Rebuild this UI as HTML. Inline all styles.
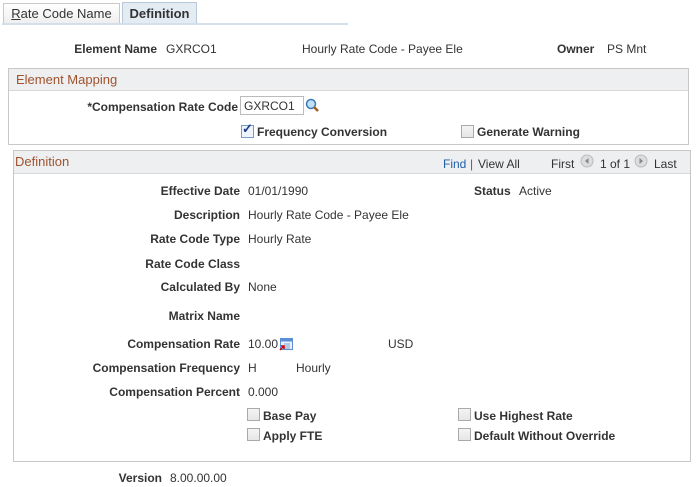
<!DOCTYPE html>
<html><head><meta charset="utf-8"><style>
body{margin:0;width:699px;height:487px;background:#fff;font-family:"Liberation Sans",Arial,sans-serif;font-size:12px;color:#333;position:relative;overflow:hidden}
.a{position:absolute;white-space:nowrap;line-height:14px}
.b{font-weight:bold}
.r{text-align:right}
.cb{position:absolute;width:11px;height:11px;border:1px solid #aaa;background:linear-gradient(#f4f4f4,#e6e6e6)}
.box{position:absolute;border:1px solid #c8c8c8}
.hd{position:absolute;left:0;right:0;top:0;background:#eeeff1;border-bottom:1px solid #d8d8d8;color:#a0522d;font-size:13px}
</style></head><body>
<div class="a" style="left:3px;top:3px;width:115px;height:20px;border:1px solid #c8c8c8;border-bottom:none;background:linear-gradient(#fff,#eee);font-size:13px;line-height:20px;text-align:center;color:#333"><u>R</u>ate Code Name</div>
<div class="a" style="left:122px;top:2px;width:73px;height:21px;border:1px solid #b8c8d8;border-bottom:none;background:#e3ebf3;font-size:13px;line-height:22px;text-align:center;font-weight:bold;color:#333">Definition</div>
<div style="position:absolute;left:2px;top:23px;width:346px;height:2px;background:#d3dfeb"></div>

<div class="a b r" style="left:40px;width:117px;top:42px">Element Name</div>
<div class="a" style="left:166px;top:42px">GXRCO1</div>
<div class="a" style="left:302px;top:42px">Hourly Rate Code - Payee Ele</div>
<div class="a b" style="left:557px;top:42px">Owner</div>
<div class="a" style="left:607px;top:42px">PS Mnt</div>

<div class="box" style="left:8px;top:68px;width:679px;height:75px">
<div class="hd" style="height:21px;line-height:21px;padding-left:7px">Element Mapping</div>
</div>
<div class="a b r" style="left:40px;width:198px;top:100px">*Compensation Rate Code</div>
<div class="a" style="left:240px;top:96px;width:62px;height:19px;border:1px solid #bbb;line-height:19px;padding-left:3px;box-sizing:border-box;width:64px">GXRCO1</div>
<svg style="position:absolute;left:305px;top:98px" width="15" height="15"><circle cx="6" cy="6" r="4.5" fill="#bfe0f5" stroke="#3a7ab8" stroke-width="1.5"/><line x1="9" y1="9" x2="13" y2="13" stroke="#a06020" stroke-width="2.5"/></svg>
<div class="cb" style="left:241px;top:125px;background:#eef4fb;border-color:#7a9cc0"></div>
<div class="a" style="left:242px;top:122px;color:#1a3a8a;font-weight:bold;font-size:13px">✓</div>
<div class="a b" style="left:257px;top:125px">Frequency Conversion</div>
<div class="cb" style="left:461px;top:125px"></div>
<div class="a b" style="left:477px;top:125px">Generate Warning</div>

<div class="box" style="left:13px;top:150px;width:676px;height:310px">
<div class="hd" style="height:22px;line-height:22px;padding-left:1px">Definition</div>
</div>
<div class="a" style="left:443px;top:157px;color:#1f5fa8">Find</div>
<div class="a" style="left:470px;top:157px;color:#c33">|</div>
<div class="a" style="left:478px;top:157px">View All</div>
<div class="a" style="left:551px;top:157px">First</div>
<svg style="position:absolute;left:580px;top:154px" width="14" height="14"><circle cx="7" cy="7" r="6" fill="#ddd" stroke="#bbb"/><path d="M8.5 4L5 7l3.5 3z" fill="#888"/></svg>
<div class="a" style="left:600px;top:157px">1 of 1</div>
<svg style="position:absolute;left:634px;top:154px" width="14" height="14"><circle cx="7" cy="7" r="6" fill="#ddd" stroke="#bbb"/><path d="M5.5 4L9 7l-3.5 3z" fill="#888"/></svg>
<div class="a" style="left:654px;top:157px">Last</div>

<div class="a b r" style="left:40px;width:200px;top:184px">Effective Date</div><div class="a" style="left:248px;top:184px">01/01/1990</div>
<div class="a b" style="left:474px;top:184px">Status</div><div class="a" style="left:519px;top:184px">Active</div>
<div class="a b r" style="left:40px;width:200px;top:208px">Description</div><div class="a" style="left:248px;top:208px">Hourly Rate Code - Payee Ele</div>
<div class="a b r" style="left:40px;width:200px;top:232px">Rate Code Type</div><div class="a" style="left:248px;top:232px">Hourly Rate</div>
<div class="a b r" style="left:40px;width:200px;top:257px">Rate Code Class</div>
<div class="a b r" style="left:40px;width:200px;top:280px">Calculated By</div><div class="a" style="left:248px;top:280px">None</div>
<div class="a b r" style="left:40px;width:200px;top:309px">Matrix Name</div>
<div class="a b r" style="left:40px;width:200px;top:337px">Compensation Rate</div><div class="a" style="left:248px;top:337px">10.00</div>
<svg style="position:absolute;left:279px;top:337px" width="15" height="14"><rect x="1.5" y="1.5" width="12" height="11" fill="#e8f0fb" stroke="#5b8ed6"/><rect x="1.5" y="1.5" width="12" height="3" fill="#5b8ed6"/><path d="M5 7h6M5 9h6M5 11h6" stroke="#7aa2d8"/><path d="M1 13l4-4M2 9h3v3" stroke="#c00" stroke-width="1.5" fill="none"/></svg>
<div class="a" style="left:388px;top:337px">USD</div>
<div class="a b r" style="left:40px;width:200px;top:361px">Compensation Frequency</div><div class="a" style="left:248px;top:361px">H</div><div class="a" style="left:296px;top:361px">Hourly</div>
<div class="a b r" style="left:40px;width:200px;top:385px">Compensation Percent</div><div class="a" style="left:248px;top:385px">0.000</div>
<div class="cb" style="left:247px;top:408px"></div><div class="a b" style="left:263px;top:409px">Base Pay</div>
<div class="cb" style="left:458px;top:408px"></div><div class="a b" style="left:474px;top:409px">Use Highest Rate</div>
<div class="cb" style="left:247px;top:428px"></div><div class="a b" style="left:263px;top:429px">Apply FTE</div>
<div class="cb" style="left:458px;top:428px"></div><div class="a b" style="left:474px;top:429px">Default Without Override</div>

<div class="a b r" style="left:40px;width:122px;top:471px">Version</div><div class="a" style="left:170px;top:471px">8.00.00.00</div>
</body></html>
